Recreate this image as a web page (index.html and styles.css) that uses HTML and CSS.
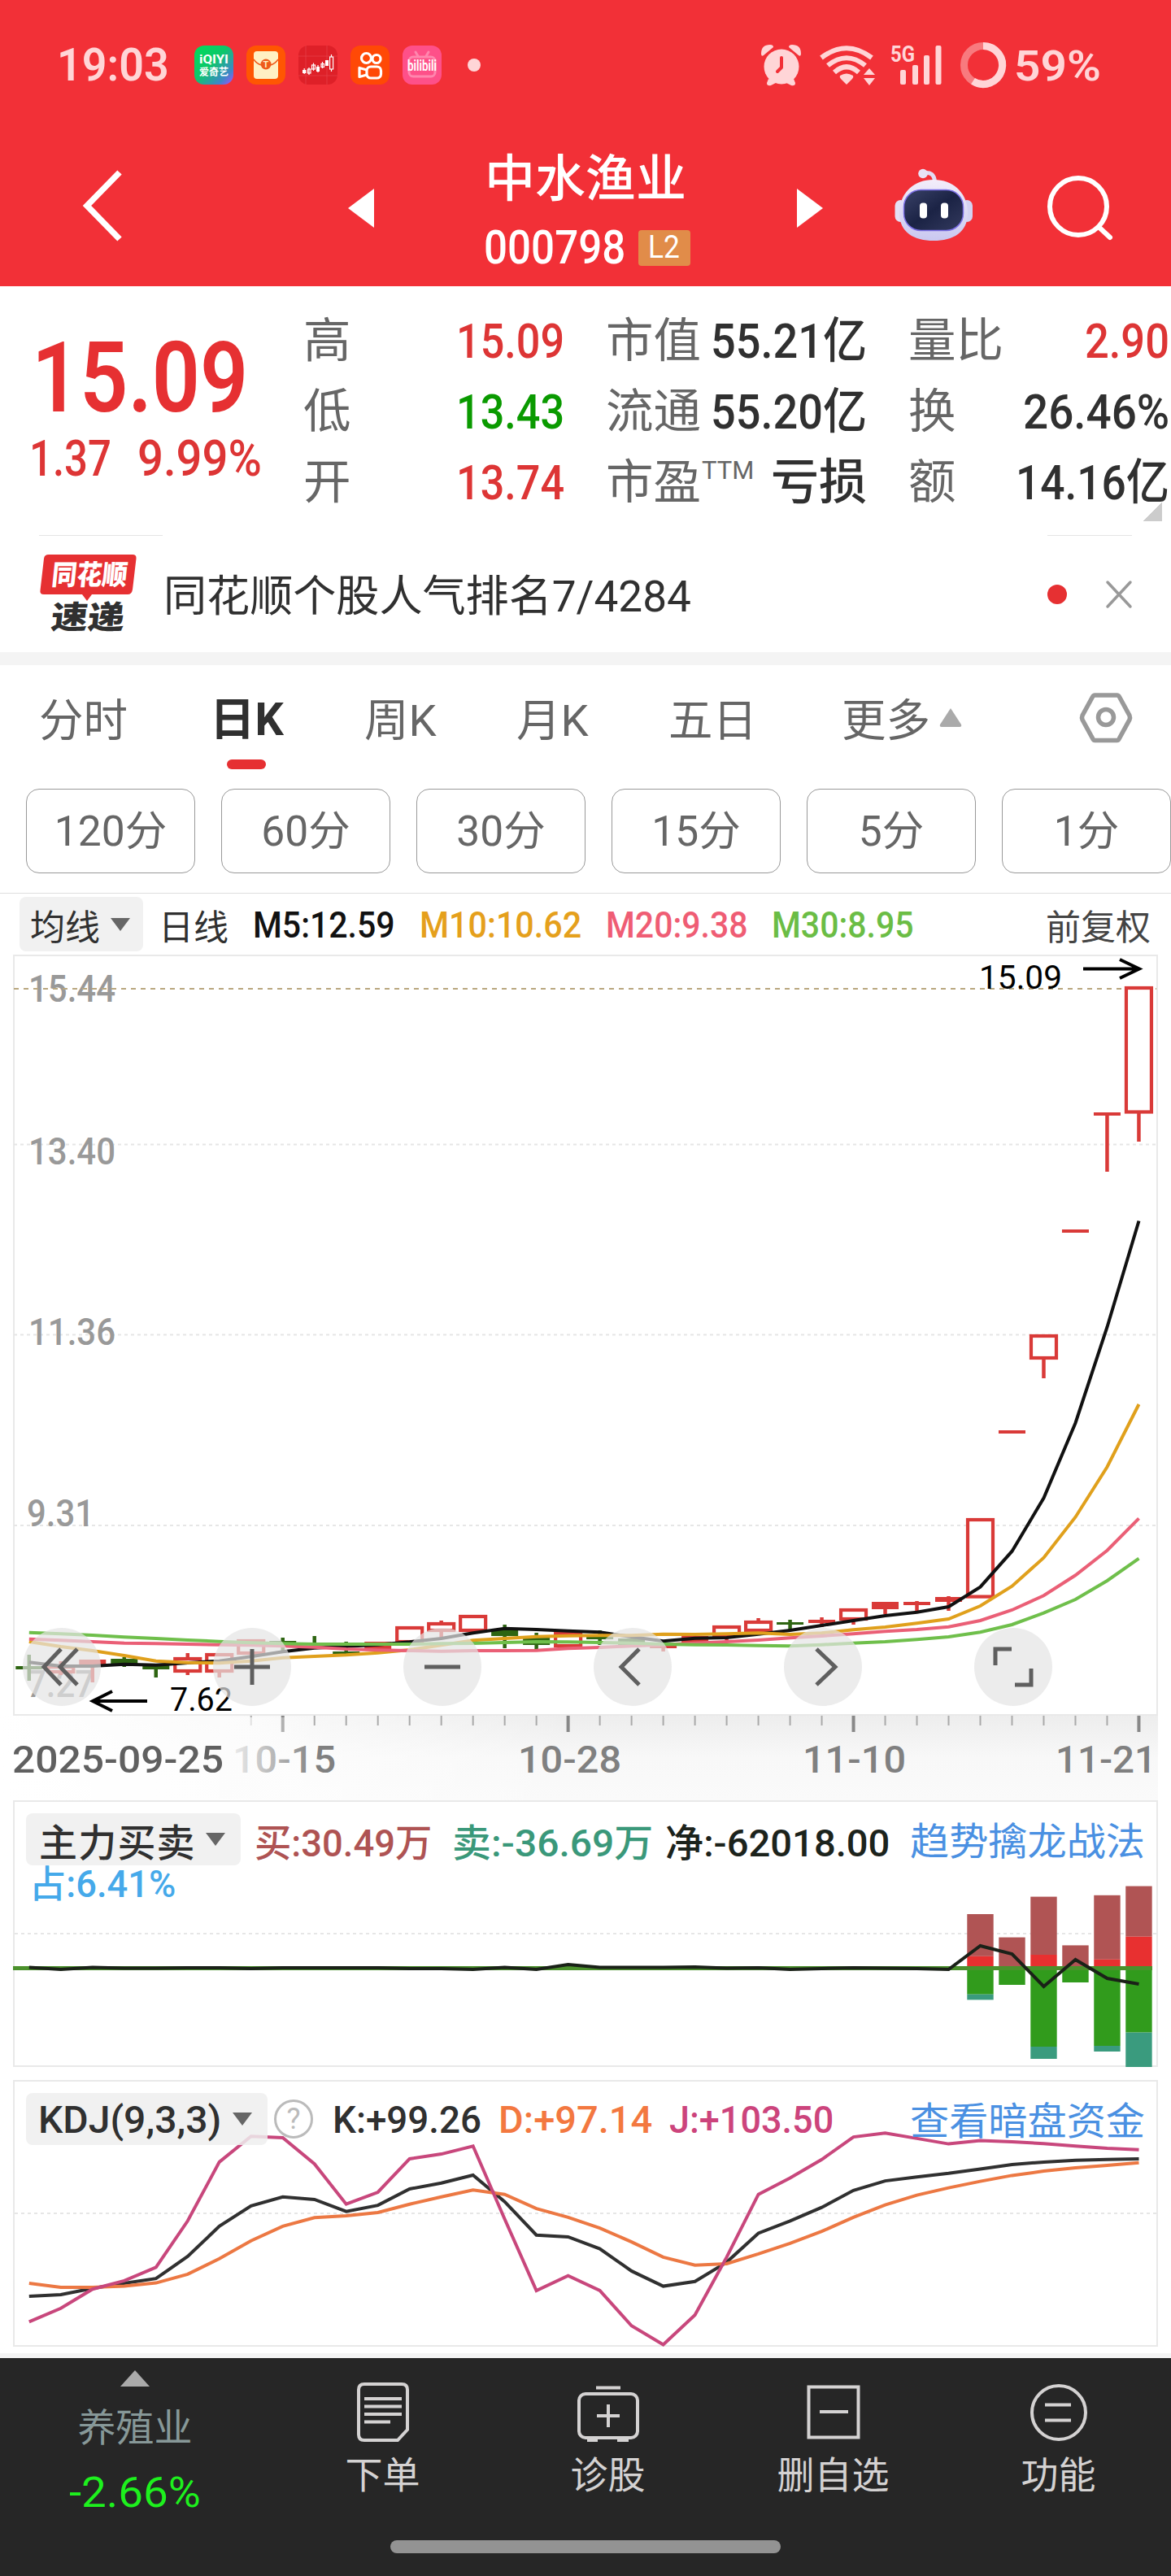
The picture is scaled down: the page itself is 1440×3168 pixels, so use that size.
FILE: index.html
```html
<!DOCTYPE html>
<html lang="zh-CN">
<head>
<meta charset="utf-8">
<title>中水渔业 000798</title>
<link rel="stylesheet" href="styles.css">
</head>
<body>
<header class="top">
  <div class="status">
    <span class="clock"><span class="fit" data-w="138">19:03</span></span>
    <div class="apps">
      <svg class="app" viewBox="0 0 48 48"><defs><linearGradient id="qy" x1="0" y1="0" x2="1" y2="1"><stop offset="0" stop-color="#00dc5a"/><stop offset=".45" stop-color="#0cc76a"/><stop offset=".8" stop-color="#3f86c9"/><stop offset="1" stop-color="#b04cff"/></linearGradient></defs><rect width="48" height="48" rx="12" fill="url(#qy)"/><text x="24" y="22" text-anchor="middle" font-size="14" font-weight="700" fill="#fff" textLength="36" lengthAdjust="spacingAndGlyphs">iQIYI</text><text x="24" y="36.500" text-anchor="middle" font-size="12.500" font-weight="700" fill="#fff" textLength="36">爱奇艺</text></svg>
      <svg class="app" viewBox="0 0 48 48"><rect width="48" height="48" rx="12" fill="#ff5602"/><rect x="9" y="7" width="30" height="34" rx="4" fill="#fff0c4"/><path d="M9 17 Q13 23 19 24 M39 17 Q35 23 29 24" stroke="#ee5a1a" stroke-width="1.500" fill="none"/><circle cx="24" cy="23" r="6.500" fill="#ee5a1a"/><text x="24" y="27" text-anchor="middle" font-size="11" font-weight="700" fill="#fff0c4">T</text></svg>
      <svg class="app" viewBox="0 0 48 48"><rect width="48" height="48" rx="12" fill="#de2028"/><path d="M0 13H48 M0 37H48 M9 0V48 M35 0V48" stroke="#e8444a" stroke-width=".7"/><g fill="#fff"><rect x="5" y="30" width="4.500" height="4"/><rect x="22" y="26" width="4" height="6"/><rect x="33" y="18" width="4" height="7"/></g><g fill="none" stroke="#fff" stroke-width="1.200"><rect x="11.500" y="29" width="3.500" height="5"/><rect x="16.500" y="24" width="4" height="5"/><rect x="28" y="22.500" width="3.500" height="4"/><path d="M7.200 28V35 M13 27V36 M18.500 21.500V31 M24 24V33 M29.500 20V28 M40.500 11V32"/><rect x="38.600" y="14" width="4" height="15" fill="#de2028"/></g></svg>
      <svg class="app" viewBox="0 0 48 48"><rect width="48" height="48" rx="12" fill="#ff4906"/><g fill="none" stroke="#fff" stroke-width="3.200"><circle cx="19.500" cy="15.500" r="6"/><circle cx="32" cy="16.500" r="5"/><rect x="20" y="26" width="17.500" height="14" rx="5"/><path d="M20 30 L11 27.500 V38.500 L20 36" stroke-linejoin="round"/></g></svg>
      <svg class="app" viewBox="0 0 48 48"><rect width="48" height="48" rx="12" fill="#fe5089"/><g fill="none" stroke="#ff86ae" stroke-width="3" stroke-linecap="round"><rect x="8" y="14" width="32" height="24" rx="5"/><path d="M16 8L19 13 M32 8L29 13"/></g><text x="24" y="31" text-anchor="middle" font-size="18" font-weight="600" fill="#fff" textLength="36" lengthAdjust="spacingAndGlyphs">bilibili</text></svg>
    </div>
    <i class="more-dot"></i>
    <svg class="sys" viewBox="930 50 312 60" width="312" height="60">
      <g fill="#ffd5d7">
        <circle cx="961" cy="82" r="21.500"/>
        <path d="M936 66 Q936 55 947 55 Q951 55 951 58 L939 68 Q936 70 936 66Z M985 66 Q985 55 974 55 Q970 55 970 58 L982 68 Q985 70 985 66Z"/>
        <path d="M945 97L956 101L948 105Q943 106 943 102Z M976 97L965 101L973 105Q978 106 978 102Z"/>
        <path d="M1033 93Q1041 88 1049 93Q1050 95 1048 97L1041 104L1034 97Q1032 95 1033 93Z"/>
        <path d="M1069 84L1076 92H1062Z M1069 105L1076 96H1062Z"/>
        <rect x="1107" y="86" width="7" height="18" rx="2"/><rect x="1122" y="80" width="7" height="24" rx="2"/><rect x="1136" y="68" width="7" height="36" rx="2"/><rect x="1150.500" y="56" width="7" height="48" rx="2"/>
      </g>
      <path d="M961 71V83L956 88" fill="none" stroke="#f23037" stroke-width="4" stroke-linecap="round" stroke-linejoin="round"/>
      <g fill="none" stroke="#ffd5d7" stroke-width="6"><path d="M1010 71Q1041 47.500 1072 71"/><path d="M1018 80.500Q1041 62 1064 80.500"/><path d="M1026 89Q1041 75.500 1056 89"/></g>
      <text x="1095" y="76" font-size="28" font-weight="700" fill="#ffd5d7" textLength="30" lengthAdjust="spacingAndGlyphs">5G</text>
      <circle cx="1209" cy="80" r="23.500" fill="none" stroke="#f87a7e" stroke-width="9"/>
      <path d="M1209 56.500A23.500 23.500 0 1 1 1196.500 99.800" fill="none" stroke="#ffd5d7" stroke-width="9"/>
    </svg>
    <span class="battery"><span class="fit" data-w="107">59%</span></span>
  </div>
  <div class="titlebar">
    <svg class="back" viewBox="0 0 48 90" width="48" height="90"><path d="M45 4L5 45L45 86" fill="none" stroke="#fff" stroke-width="7.500"/></svg>
    <i class="prev"></i>
    <div class="name">
      <h1>中水渔业</h1>
      <div class="code"><span class="fit" data-w="174">000798</span><b class="lv2"><span class="fit" data-w="39">L2</span></b></div>
    </div>
    <i class="next"></i>
    <svg class="robot" viewBox="1100 206 98 92" width="98" height="92">
      <defs><linearGradient id="shell" x1="0" y1="0" x2="0" y2="1"><stop offset="0" stop-color="#f3edfa"/><stop offset="1" stop-color="#c9c8f0"/></linearGradient><linearGradient id="face" x1="0" y1="0" x2="1" y2="1"><stop offset="0" stop-color="#3a4268"/><stop offset=".5" stop-color="#1b2345"/><stop offset="1" stop-color="#333a5e"/></linearGradient></defs>
      <path d="M1135 213Q1149 210 1149.500 224" fill="none" stroke="#e2dcf4" stroke-width="5"/><circle cx="1135" cy="213.500" r="5.800" fill="#e8e2f6"/>
      <rect x="1100.500" y="246" width="14" height="27" rx="7" fill="#e4e0f5"/><rect x="1182" y="246" width="14" height="27" rx="7" fill="#d4d2f2"/>
      <path d="M1148 221C1175 221 1190 240 1190 262C1190 286 1172 296 1148 296C1124 296 1106 286 1106 262C1106 240 1121 221 1148 221Z" fill="url(#shell)"/>
      <rect x="1111.500" y="233.500" width="73" height="50" rx="21" fill="url(#face)" stroke="#7b6fe6" stroke-width="1.500"/>
      <rect x="1131" y="249.500" width="9" height="19" rx="4" fill="#fff"/><rect x="1157" y="249.500" width="9" height="19" rx="4" fill="#fff"/>
    </svg>
    <svg class="search" viewBox="1286 214 84 84" width="84" height="84"><circle cx="1326" cy="254" r="35" fill="none" stroke="#fff" stroke-width="6"/><path d="M1351 279L1365 292" stroke="#fff" stroke-width="6" stroke-linecap="round"/></svg>
  </div>
</header>

<section class="quote">
  <div class="price">
    <div class="last"><span class="fit" data-w="266">15.09</span></div>
    <div class="chg"><span class="fit" data-w="101">1.37</span><span class="fit" data-w="153">9.99%</span></div>
  </div>
  <dl class="facts">
    <div><dt>高</dt><dd class="up"><span class="fit" data-w="133">15.09</span></dd></div>
    <div><dt>市值</dt><dd><span class="fit" data-w="192">55.21亿</span></dd></div>
    <div><dt>量比</dt><dd class="up"><span class="fit" data-w="104">2.90</span></dd></div>
    <div><dt>低</dt><dd class="down"><span class="fit" data-w="133">13.43</span></dd></div>
    <div><dt>流通</dt><dd><span class="fit" data-w="192">55.20亿</span></dd></div>
    <div><dt>换</dt><dd><span class="fit" data-w="180">26.46%</span></dd></div>
    <div><dt>开</dt><dd class="up"><span class="fit" data-w="133">13.74</span></dd></div>
    <div><dt>市盈<sup>TTM</sup></dt><dd><span class="fit" data-w="118">亏损</span></dd></div>
    <div><dt>额</dt><dd><span class="fit" data-w="189">14.16亿</span></dd></div>
  </dl>
  <i class="corner"></i>
  <div class="hairs"><i class="hair-l"></i><i class="hair-r"></i></div>
</section>

<section class="news">
  <svg viewBox="48 680 122 100" width="122" height="100">
    <path d="M60 682H163Q168 682 167.500 687L163 725Q162 731 157 731H113L107 739L101 731H54Q48.500 731 49.500 726L54 687Q54.500 682 60 682Z" fill="#e63032"/>
    <g transform="skewX(-6)"><text x="138" y="719" font-size="34" font-weight="900" fill="#fff" textLength="93" lengthAdjust="spacingAndGlyphs">同花顺</text><text x="143" y="773" font-size="39" font-weight="900" fill="#303030" textLength="90" lengthAdjust="spacing">速递</text></g>
  </svg>
  <p><span class="fit" data-w="649">同花顺个股人气排名7/4284</span></p>
  <i class="unread"></i>
  <svg class="close" viewBox="0 0 32 34" width="32" height="34"><path d="M2 2L30 32M30 2L2 32" stroke="#999" stroke-width="3.500" stroke-linecap="round"/></svg>
</section>

<nav class="tabs">
  <span>分时</span><span class="on">日K</span><span>周K</span><span>月K</span><span>五日</span><span>更多<svg viewBox="0 0 28 24" width="28" height="24"><path d="M14 1L27 21Q28 24 25 24H3Q0 24 1 21Z" fill="#aaa"/></svg></span>
  <svg class="cfg" viewBox="1328 852 64 62" width="64" height="62"><g fill="none" stroke="#999" stroke-width="5.500"><path d="M1346.500 855H1373.500Q1375.500 855 1376.500 857L1389 880Q1390 882.500 1389 885L1376.500 908Q1375.500 910.500 1373.500 910.500H1346.500Q1344.500 910.500 1343.500 908L1331 885Q1330 882.500 1331 880L1343.500 857Q1344.500 855 1346.500 855Z"/><circle cx="1360" cy="882" r="9.500"/></g></svg>
</nav>
<div class="minutes">
  <span>120分</span><span>60分</span><span>30分</span><span>15分</span><span>5分</span><span>1分</span>
</div>

<div class="ma">
  <button class="pick">均线<i></i></button>
  <span>日线</span>
  <span class="fit m5" data-w="175">M5:12.59</span>
  <span class="fit m10" data-w="199">M10:10.62</span>
  <span class="fit m20" data-w="175">M20:9.38</span>
  <span class="fit m30" data-w="175">M30:8.95</span>
  <span class="adj">前复权</span>
</div>

<section class="kline">
  <svg id="kline" viewBox="0 1174 1440 936" width="1440" height="936">
    <rect x="17" y="1175" width="1406" height="934" fill="none" stroke="#e9e9e9" stroke-width="2"/>
    <path d="M17 1407.500H1422M17 1641.500H1422M17 1876H1422" class="grid"/>
    <g class="ylab">
      <text x="35" y="1232" textLength="107">15.44</text>
      <text x="35" y="1432" textLength="107">13.40</text>
      <text x="35" y="1654" textLength="107">11.36</text>
      <text x="33" y="1877" textLength="83">9.31</text>
      <text x="33" y="2087" textLength="83">7.27</text>
    </g>
    <path d="M17 1216H1422" stroke="#b9a77f" stroke-width="2" stroke-dasharray="6 6"/>
    <g id="candles"></g>
    <g id="averages"></g>
    <g class="marks">
      <text x="1204" y="1216" textLength="102">15.09</text>
      <text x="209" y="2104" textLength="77">7.62</text>
      <path d="M1332 1191.500H1400M1377 1180L1401 1191.500L1377 1203M181 2092H115M138 2080L114 2092L138 2104"/>
    </g>
  </svg>
  <div class="tools">
    <button><svg viewBox="-48 -48 96 96"><path d="M-1 -22L-22 0L-1 22M19 -22L-2 0L19 22"/></svg></button>
    <button><svg viewBox="-48 -48 96 96"><path d="M-22 0H22M0 -22V22"/></svg></button>
    <button><svg viewBox="-48 -48 96 96"><path d="M-22 0H22"/></svg></button>
    <button><svg viewBox="-48 -48 96 96"><path d="M8 -22L-14 0L8 22"/></svg></button>
    <button><svg viewBox="-48 -48 96 96"><path d="M-8 -22L15 0L-8 22"/></svg></button>
    <button><svg viewBox="-48 -48 96 96"><path d="M-2 -22H-22V-2M22 2V22H2"/></svg></button>
  </div>
</section>
<div class="axis">
  <svg viewBox="0 2110 1440 104" width="1440" height="104">
    <defs>
      <linearGradient id="down" x1="0" y1="0" x2="0" y2="1"><stop offset="0" stop-color="#ededed"/><stop offset=".5" stop-color="#f8f8f8"/><stop offset="1" stop-color="#fafafa"/></linearGradient>
      <linearGradient id="veil" gradientUnits="userSpaceOnUse" x1="270" y1="0" x2="390" y2="0"><stop offset="0" stop-color="#fcfcfc"/><stop offset="1" stop-color="#fcfcfc" stop-opacity="0"/></linearGradient>
      <linearGradient id="veil2" gradientUnits="userSpaceOnUse" x1="0" y1="0" x2="700" y2="0"><stop offset="0" stop-color="#fff"/><stop offset=".4" stop-color="#fff" stop-opacity=".75"/><stop offset="1" stop-color="#fff" stop-opacity="0"/></linearGradient>
    </defs>
    <rect y="2110" width="1424" height="104" fill="url(#down)"/>
    <rect y="2110" width="700" height="104" fill="url(#veil2)"/>
    <g id="ticks"></g>
    <g class="xlab">
      <text x="286" y="2180" textLength="127">10-15</text>
      <text x="637" y="2180" textLength="127">10-28</text>
      <text x="987" y="2180" textLength="127">11-10</text>
      <text x="1298" y="2180" textLength="124">11-21</text>
      <rect x="270" y="2112" width="120" height="100" fill="url(#veil)"/>
      <text x="15" y="2180" textLength="260" fill="#606060">2025-09-25</text>
    </g>
  </svg>
</div>

<section class="panel">
  <svg viewBox="18 2216 1404 324" width="1404" height="324">
    <path d="M18 2378H1422" class="grid"/>
    <g id="flow"></g>
  </svg>
  <div class="legend">
    <button class="pick wide">主力买卖<i></i></button>
    <span class="fit buy" data-w="218">买:30.49万</span>
    <span class="fit sell" data-w="247">卖:-36.69万</span>
    <span class="fit net" data-w="276">净:-62018.00</span>
    <a class="fit" data-w="289">趋势擒龙战法</a>
  </div>
  <div class="share"><span class="fit" data-w="180">占:6.41%</span></div>
</section>

<section class="panel kdj">
  <svg viewBox="18 2560 1404 324" width="1404" height="324">
    <path d="M18 2722H1422" class="grid"/>
    <g id="kdj"></g>
  </svg>
  <div class="legend">
    <button class="pick wider"><span class="fit" data-w="225">KDJ(9,3,3)</span><i></i></button>
    <b class="help">?</b>
    <span class="fit k" data-w="183">K:+99.26</span>
    <span class="fit d" data-w="189">D:+97.14</span>
    <span class="fit j" data-w="202">J:+103.50</span>
    <a class="fit" data-w="289">查看暗盘资金</a>
  </div>
</section>
<div class="strip"></div>

<footer class="dock">
  <div class="items">
    <div class="sector"><i></i><span>养殖业</span><b><span class="fit" data-w="162">-2.66%</span></b></div>
    <div class="item"><svg viewBox="435 2928 70 78"><path d="M447 2932H493Q500 2932 500 2939V2988L488 3001H447Q440 3001 440 2994V2939Q440 2932 447 2932ZM447 2950H493M447 2959.500H493M447 2969H493M447 2978.500H479"/></svg><span>下单</span></div>
    <div class="item"><svg viewBox="707 2928 80 78"><rect x="711" y="2944" width="72" height="54" rx="8"/><path d="M732 2936.500H762M733 2971H761M747 2957V2985M721 3001H734M758 3001H772"/></svg><span>诊股</span></div>
    <div class="item"><svg viewBox="988 2928 70 78"><path d="M992.500 2935.500H1053.500V2997.500H992.500ZM1006 2966H1041"/></svg><span>删自选</span></div>
    <div class="item"><svg viewBox="1266 2928 72 78"><circle cx="1302" cy="2967" r="33"/><path d="M1285 2957.500H1317M1285 2976.500H1317"/></svg><span>功能</span></div>
  </div>
  <i class="home"></i>
</footer>
<script src="chart.js"></script>
</body>
</html>
```
FILE: styles.css
```css
* { box-sizing: border-box; }
body { margin: 0; width: 1440px; background: #fff; color: #303030; font-family: Roboto, "Noto Sans CJK SC", sans-serif; }
i { font-style: normal; display: block; }
svg { display: block; overflow: visible; }
h1, p, dl, dd { margin: 0; }
button { border: 0; padding: 0; font: inherit; color: inherit; }
.fit { display: inline-block; white-space: nowrap; transform-origin: left center; }

.top { height: 352px; background: #f23037; color: #fff; }
.status { height: 160px; display: flex; align-items: center; padding-left: 70px; color: #ffd5d7; }
.clock { font-size: 55px; font-weight: 600; width: 169px; }
.apps { display: flex; gap: 16px; }
.app { width: 48px; height: 48px; }
.more-dot { width: 16px; height: 16px; border-radius: 8px; background: #ffd5d7; margin-left: 32px; }
.sys { margin-left: 339px; }
.battery { font-size: 51px; font-weight: 600; margin-left: 5px; padding-top: 2px; }
.titlebar { height: 192px; display: flex; align-items: center; padding-left: 102px; }
.back { margin-top: -6px; }
.prev, .next { width: 0; height: 0; border: 24px solid transparent; }
.prev { border-right: 32px solid #fff; border-left: 0; margin-left: 278px; }
.next { border-left: 32px solid #fff; border-right: 0; }
.name { width: 520px; text-align: center; margin-top: 12px; }
h1 { font-size: 62px; font-weight: 500; line-height: 86px; }
.code { font-size: 57px; font-weight: 500; line-height: 82px; display: flex; align-items: center; justify-content: center; gap: 15px; padding-left: 4px; }
.lv2 { width: 64px; height: 44px; line-height: 43px; font-size: 38px; font-weight: 400; background: #e18c49; border-radius: 4px; }
.robot { margin-left: 88px; margin-top: -8px; }
.search { margin-left: 88px; }

.quote { height: 308px; position: relative; display: grid; grid-template-columns: 375px 1fr; grid-template-rows: 1fr 2px; }
.price { padding-left: 39px; color: #e63032; }
.last { font-size: 120px; font-weight: 600; line-height: 130px; padding-top: 48px; height: 172px; }
.chg { font-size: 61px; font-weight: 500; line-height: 80px; display: flex; gap: 32px; margin-left: -3px; color: #dd3535; }
.facts { display: grid; grid-template-columns: repeat(3, 319px); column-gap: 53px; grid-auto-rows: 87px; padding-top: 24px; font-size: 59px; line-height: 87px; }
.facts div { display: flex; justify-content: space-between; white-space: nowrap; }
dt { color: #666; font-size: 58.500px; margin-left: -2px; }
dd { font-size: 60px; font-weight: 500; }
sup { font-size: 31px; line-height: 0; vertical-align: 24px; margin-left: 1px; }
.up { color: #dd3535; }
.down { color: #0a9a00; }
.corner { position: absolute; left: 1405px; top: 266px; width: 24px; height: 23px; background: linear-gradient(to bottom right, transparent 50%, #ccc 50%); }
.hairs { grid-column: 1 / 3; display: flex; justify-content: space-between; padding: 0 48px; }
.hairs i { height: 1px; background: #e4e4e4; }
.hair-l { width: 152px; }
.hair-r { width: 104px; }

.news { height: 142px; display: flex; align-items: center; padding: 0 48px; }
.news svg:first-child { margin-top: -3px; }
.news p { font-size: 53px; line-height: 80px; margin: 5px 0 0 31px; width: 649px; }
.unread { width: 24px; height: 24px; border-radius: 12px; background: #e63032; margin-left: auto; }
.close { margin-left: 48px; }

.tabs { border-top: 16px solid #f4f4f4; height: 152px; padding: 0 48px; display: grid; grid-template-columns: 213px 187px 187px 187px 213px 1fr 64px; align-items: center; font-size: 54.500px; color: #666; }
.tabs span { position: relative; display: flex; align-items: center; line-height: 136px; }
.tabs span svg { margin: -8px 0 0 11px; }
.tabs .on { color: #303030; font-weight: 700; left: -3px; font-size: 55.500px; }
.tabs .on::after { content: ""; position: absolute; left: 21px; top: 116px; width: 48px; height: 12px; border-radius: 6px; background: #e63032; }
.cfg { margin-top: -6px; }
.minutes { display: flex; gap: 32px; padding: 0 0 24px 32px; margin-top: 16px; overflow: hidden; border-bottom: 1px solid #dedede; font-size: 51.500px; color: #666; }
.minutes span { flex: 0 0 208px; height: 104px; line-height: 104px; border: 1.500px solid #999; border-radius: 16px; text-align: center; }

.ma { height: 75px; display: flex; align-items: center; padding: 0 25px 0 24px; font-size: 43px; gap: 30px; }
.pick { background: rgba(238, 238, 238, .85); border-radius: 8px; height: 67px; width: 152px; display: flex; align-items: center; padding-left: 13px; gap: 13px; font-size: 43px; margin-right: -11px; color: #303030; white-space: nowrap; }
.pick i { border: 12px solid transparent; border-top: 16px solid #666; border-bottom: 0; }
.ma .fit { font-size: 45px; font-weight: 500; padding-top: 2px; }
.m5 { color: #111; } .m10 { color: #e5a01c; } .m20 { color: #ef5d74; } .m30 { color: #6bbd45; }
.adj { margin-left: auto; color: #444; }

.kline { position: relative; height: 936px; }
.grid { stroke: #e6e6e6; stroke-width: 2; stroke-dasharray: 4 4; fill: none; }
.ylab { font-size: 47px; font-weight: 500; fill: #999; }
.marks text { font-size: 41px; fill: #000; }
.marks path { stroke: #000; stroke-width: 4; fill: none; }
.tools { position: absolute; left: 28px; top: 828px; display: flex; gap: 138px; }
.tools button { width: 96px; height: 96px; border-radius: 48px; background: rgba(228, 228, 228, .7); }
.tools path { fill: none; stroke: #5f5f5f; stroke-width: 5; }
.axis { height: 104px; }
.xlab { font-size: 47px; font-weight: 500; fill: #808080; }

.panel { position: relative; margin: 0 16px 16px; height: 328px; border: 2px solid #e9e9e9; }
.panel.kdj { margin-bottom: 8px; }
.panel > svg { overflow: visible; }
.legend { position: absolute; left: 14px; top: 14px; height: 64px; width: 1376px; display: flex; align-items: center; font-size: 47px; font-weight: 500; }
.panel .pick { height: 64px; font-size: 47px; margin: 0; }
.pick.wide { width: 264px; padding-left: 16px; letter-spacing: 1.200px; gap: 12px; }
.pick.wider { width: 297px; padding-left: 15px; gap: 14px; }
.buy { margin-left: 17px; color: #ae5353; }
.sell { margin-left: 25px; color: #3a987a; }
.net { margin-left: 14px; color: #1c231c; }
.legend a { margin-left: auto; color: #4a90e2; font-weight: 400; padding-bottom: 3px; }
.share { position: absolute; left: 18px; top: 78px; font-size: 46px; line-height: 46px; font-weight: 500; color: #45a9ea; }
.help { width: 48px; height: 48px; border: 3px solid #bbb; border-radius: 24px; margin-left: 8px; text-align: center; font-size: 36px; line-height: 43px; font-weight: 400; color: #bbb; }
.k { margin-left: 24px; } .d { margin-left: 21px; color: #f37840; } .j { margin-left: 21px; color: #cc447c; }

.strip { height: 6px; background: #f4f4f4; }
.dock { height: 268px; background: #262626; color: #d4d2d2; }
.items { height: 224px; display: grid; grid-template-columns: 332px repeat(4, 277px); }
.items > div { display: flex; flex-direction: column; align-items: center; font-size: 46px; }
.sector i { margin-top: 15px; border: 18px solid transparent; border-bottom: 20px solid #aaa; border-top: 0; }
.sector > span { color: #879898; line-height: 60px; margin-top: 21px; font-size: 47px; }
.sector b { font-size: 51px; line-height: 60px; font-weight: 400; color: #1ef01e; margin-top: 20px; }
.item svg { height: 78px; margin-top: 28px; fill: none; stroke: #d4d2d2; stroke-width: 4; }
.item span { line-height: 60px; margin-top: 8px; }
.home { width: 480px; height: 16px; border-radius: 8px; background: #939393; margin: 0 auto; }
```
FILE: chart.js
```js
// Squeeze labels to the narrow numeral widths given in data-w.
document.querySelectorAll('.fit').forEach(function (el) {
  var w = +el.dataset.w, n = el.offsetWidth;
  el.style.transform = 'scaleX(' + w / n + ')';
  el.style.marginRight = (w - n) + 'px';
});
document.querySelectorAll('text[textLength]').forEach(function (t) {
  t.setAttribute('lengthAdjust', 'spacingAndGlyphs');
});

var NS = 'http://www.w3.org/2000/svg';
function add(id, tag, attrs) {
  var e = document.createElementNS(NS, tag);
  for (var k in attrs) e.setAttribute(k, attrs[k]);
  document.getElementById(id).appendChild(e);
}
function X(i) { return 35.8 + 38.99 * i; }
function line(id, ys, color, f) {
  add(id, 'polyline', {
    points: ys.map(function (y, i) { return X(i).toFixed(1) + ',' + (f ? f(y) : y).toFixed(1); }).join(' '),
    fill: 'none', stroke: color, 'stroke-width': 4
  });
}

// Each candle: direction, body top, body bottom, high, low.
var R = '#d93a38', G = '#2e6512';
[
  ['g', 2049, 2053, 2035, 2067], ['r', 2048, 2058, 2043, 2060], ['r', 2041, 2050, 2041, 2069],
  ['g', 2040, 2049, 2038, 2050], ['g', 2048, 2053, 2048, 2063], ['r', 2038, 2057, 2033, 2060],
  ['r', 2033, 2057, 2033, 2063], ['r', 2016, 2035, 2016, 2035], ['g', 2018, 2020, 2014, 2030],
  ['g', 2025, 2028, 2012, 2028], ['g', 2031, 2035, 2019, 2035], ['r', 2019, 2028, 2019, 2028],
  ['r', 2000, 2021, 2000, 2024], ['r', 1995, 2007, 1993, 2015], ['r', 1986, 2007, 1986, 2007],
  ['g', 2005, 2012, 1998, 2027], ['g', 2013, 2023, 2008, 2028], ['r', 2007, 2026, 2007, 2026],
  ['g', 2013, 2016, 2005, 2023], ['g', 2015, 2023, 2015, 2023], ['r', 2023, 2027, 2023, 2031],
  ['r', 2012, 2021, 2012, 2021], ['r', 1999, 2013, 1999, 2017], ['r', 1993, 2007, 1990, 2007],
  ['g', 1995, 1998, 1992, 2004], ['r', 1992, 1996, 1989, 2001], ['r', 1978, 1993, 1978, 1998],
  ['r', 1970, 1979, 1970, 1985], ['r', 1970, 1974, 1969, 1983], ['r', 1964, 1970, 1963, 1981],
  ['r', 1867, 1965.6, 1867, 1965], ['r', 1759, 1763, 1759, 1763], ['r', 1641, 1672, 1641, 1695],
  ['r', 1512, 1516, 1512, 1516], ['r', 1368, 1372, 1368, 1441], ['r', 1213, 1369.5, 1213, 1404]
].forEach(function (c, i) {
  var x = X(i), col = c[0] === 'r' ? R : G;
  if (c[4] > c[3] + 4) add('candles', 'path', { d: 'M' + x + ' ' + c[3] + 'V' + c[4], stroke: col, 'stroke-width': 4.5 });
  var h = c[2] - c[1];
  if (c[0] === 'r' && h > 9) add('candles', 'rect', { x: x - 15.5, y: c[1] + 2, width: 31, height: h - 4, fill: '#fff', stroke: col, 'stroke-width': 4.2 });
  else add('candles', 'rect', { x: x - 16.5, y: c[1], width: 33, height: h, fill: col });
});

line('averages', [2044.3, 2049, 2049, 2046.7, 2047.7, 2045, 2042.7, 2037.3, 2031.3, 2026.7, 2024.7, 2022.7, 2019.3, 2015, 2008.3, 2002.7, 2004, 2005.7, 2007.3, 2013, 2018.3, 2014.7, 2014, 2009.7, 2005, 1999, 1993, 1987, 1982.7, 1976, 1951.7, 1907.7, 1842.3, 1750, 1632, 1501.5], '#111');
line('averages', [2019, 2025, 2030, 2036, 2042.7, 2044.7, 2045.3, 2042.7, 2038.7, 2037, 2035.3, 2032.7, 2029, 2023.3, 2017.3, 2015, 2012.7, 2011.7, 2011.3, 2011.3, 2009.7, 2010, 2009.3, 2008.3, 2010, 2008.3, 2004.3, 2001, 1996.3, 1991, 1975, 1950.7, 1915.7, 1865.7, 1804, 1727], '#e0a01c');
line('averages', [2015.7, 2017.3, 2019, 2020.7, 2021.3, 2022, 2022.7, 2023.3, 2024.3, 2025.7, 2028, 2029.3, 2030, 2030.7, 2030, 2030, 2029.7, 2027.3, 2026, 2024.3, 2022.7, 2020.7, 2019, 2017, 2014.3, 2012, 2009.3, 2006.3, 2004, 2000.7, 1993, 1980, 1962.3, 1937.3, 1906.7, 1867.3], '#ea5f76');
line('averages', [2007.7, 2009.3, 2011, 2013.3, 2015, 2017, 2018.7, 2020.3, 2021.3, 2022, 2022, 2022, 2022, 2021.3, 2021, 2020, 2019, 2019.3, 2020, 2020.7, 2022, 2022.7, 2023, 2023.7, 2024.3, 2022.7, 2020.7, 2019, 2016.3, 2013, 2007.3, 1998, 1983.7, 1967, 1944, 1916.7], '#6fbf4b');

for (var t = 7; t < 36; t++) {
  var big = t % 9 === 8;
  add('ticks', 'rect', { x: X(t) - (big ? 2 : 1), y: 2110, width: big ? 4 : 2, height: big ? 20 : 12, fill: big ? '#888' : '#aaa' });
}

// Capital flow bars: bright red and green inner parts, dull outer parts.
[
  [30, 2354, 2405.8, 2452.7, 2459.4], [31, 2382.6, 2418, 2441, 2441], [32, 2332.6, 2404, 2517, 2532],
  [33, 2392.4, 2418, 2438, 2438], [34, 2330.8, 2409.8, 2516, 2523], [35, 2319.6, 2381.7, 2499.6, 2542]
].forEach(function (b) {
  var cols = ['#b05454', '#e83030', '#319b1c', '#3a9b7e'];
  var ys = [b[1], b[2], 2419, b[3], b[4]];
  for (var k = 0; k < 4; k++) add('flow', 'rect', { x: X(b[0]) - 16.2, y: ys[k], width: 32.4, height: ys[k + 1] - ys[k], fill: cols[k] });
});
add('flow', 'rect', { x: 16, y: 2418, width: 1401, height: 5, fill: '#4b912c' });
line('flow', [2419.6, 2422, 2419.6, 2420.5, 2420.5, 2420, 2420, 2421, 2420, 2420, 2420, 2420, 2421, 2421, 2422, 2419.6, 2422, 2416, 2419.6, 2419.6, 2419.6, 2419, 2420.5, 2420, 2422, 2421, 2420, 2420.5, 2421, 2422, 2393, 2403, 2443, 2410, 2433, 2440], '#1a2118');

function k(v) { return 2200 + v / 2.24; }
line('kdj', [1398, 1393, 1376, 1362, 1349, 1288, 1205, 1149, 1124, 1131, 1164, 1147, 1102, 1086, 1064, 1137, 1229, 1234, 1267, 1328, 1370, 1357, 1304, 1224, 1190, 1153, 1106, 1080, 1069, 1059, 1047, 1035, 1028, 1023, 1021, 1019], '#303030', k);
line('kdj', [1362, 1373, 1373, 1370, 1361, 1337, 1294, 1245, 1205, 1181, 1176, 1167, 1144, 1124, 1105, 1117, 1156, 1180, 1210, 1248, 1290, 1312, 1308, 1281, 1252, 1219, 1180, 1146, 1119, 1099, 1081, 1065, 1053, 1044, 1037, 1030], '#ec7843', k);
line('kdj', [1468, 1431, 1378, 1355, 1318, 1190, 1028, 957, 961, 1033, 1144, 1111, 1019, 1006, 984, 1185, 1382, 1341, 1382, 1479, 1531, 1449, 1290, 1117, 1072, 1021, 959, 948, 963, 978, 969, 972, 977, 984, 990, 994], '#c8477c', k);
```
